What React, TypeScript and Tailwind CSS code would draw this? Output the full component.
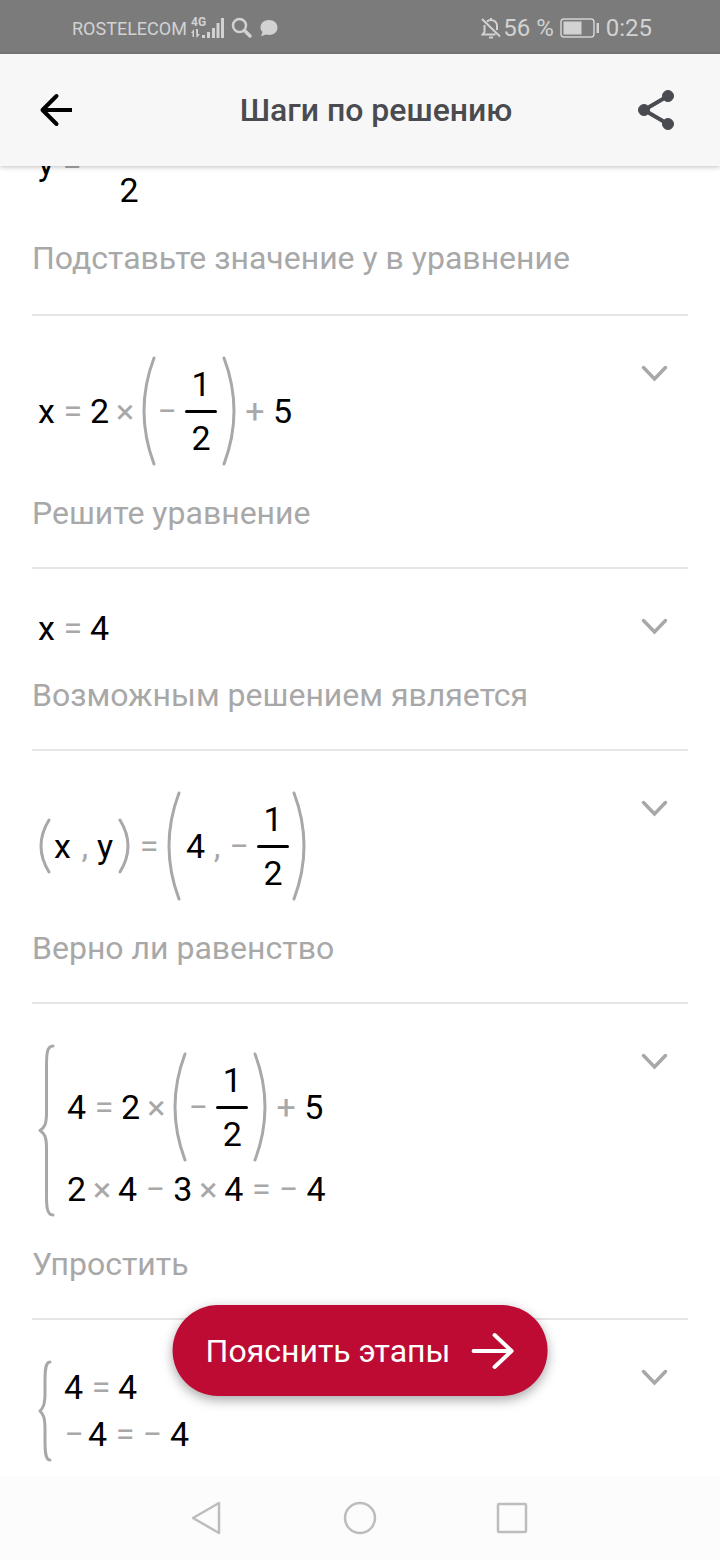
import { useLayoutEffect, useRef } from "react";
import type { ReactNode } from "react";
import clsx from "clsx";

const INITIAL_SCROLL = 91;

type StepProps = {
  formula: ReactNode;
  text?: string;
};

function Equals() {
  return <span className="mr-[7px] ml-2 w-5 text-center text-[#a8a8a8]">=</span>;
}

function Times() {
  return <span className="mx-1.5 w-5 text-center text-[#a8a8a8]">×</span>;
}

function Plus() {
  return <span className="mx-2 w-5 text-center text-[#a8a8a8]">+</span>;
}

function Minus({ unary, leading }: { unary?: boolean; leading?: boolean }) {
  return (
    <span
      className={clsx("w-5 text-center text-[#a8a8a8]", leading ? "mr-1" : "mr-2", !unary && !leading && "ml-2")}
    >
      −
    </span>
  );
}

function Comma({ wide }: { wide?: boolean }) {
  return <span className={clsx("text-center text-[#a8a8a8]", wide ? "w-6" : "w-5")}>,</span>;
}

function Fraction({ top, bottom }: { top: string; bottom: string }) {
  return (
    <span className="flex h-24 w-8 flex-col items-center justify-center">
      <span className="h-[39px] leading-[39px]">{top}</span>
      <span className="my-[6px] h-[3px] w-full rounded-full bg-black" />
      <span className="h-[39px] leading-[39px]">{bottom}</span>
    </span>
  );
}

function Parens({ small, children }: { small?: boolean; children: ReactNode }) {
  const width = small ? 14 : 16;
  const height = small ? 58 : 110;
  const path = small ? "M11 3Q-5 29 11 55" : "M13 2Q-7 55 13 108";
  return (
    <span className="flex items-center">
      <svg width={width} height={height} fill="none" stroke="#a8a8a8" strokeWidth="3" strokeLinecap="round">
        <path d={path} />
      </svg>
      {children}
      <svg width={width} height={height} fill="none" stroke="#a8a8a8" strokeWidth="3" strokeLinecap="round">
        <path d={path} transform={`translate(${width} 0) scale(-1 1)`} />
      </svg>
    </span>
  );
}

function System({ height, width, children }: { height: number; width: number; children: ReactNode }) {
  const mid = height / 2;
  const end = height - 2;
  const stem = width / 2;
  const path = [
    `M${width - 2} 2`,
    `C${stem} 2 ${stem} 12 ${stem} 22`,
    `V${mid - 18}`,
    `C${stem} ${mid - 6} ${stem - 2} ${mid - 3} 2 ${mid}`,
    `C${stem - 2} ${mid + 3} ${stem} ${mid + 6} ${stem} ${mid + 18}`,
    `V${end - 20}`,
    `C${stem} ${end - 10} ${stem} ${end} ${width - 2} ${end}`,
  ].join("");
  return (
    <div className="flex items-center gap-3">
      <svg width={width} height={height} fill="none" stroke="#a8a8a8" strokeWidth="3" strokeLinecap="round" strokeLinejoin="round">
        <path d={path} />
      </svg>
      <div className="flex flex-col gap-2">{children}</div>
    </div>
  );
}

function Row({ children }: { children: ReactNode }) {
  return <div className="flex min-h-[39px] items-center">{children}</div>;
}

function Step({ formula, text }: StepProps) {
  return (
    <section className="border-b-2 border-[#e6e6e6] pt-10 pb-[35px] first:pb-[37px] last:border-0">
      <div className="flex items-start justify-between">
        <div className="pl-1.5 text-[34px] leading-[39px] text-black">{formula}</div>
        <button type="button" aria-label="Развернуть" className="mr-3.5 flex h-[34px] w-10 items-center justify-center">
          <svg width="28" height="18" fill="none" stroke="#a8a8a8" strokeWidth="3.500" strokeLinecap="round">
            <path d="M3.500 3.500L14.500 15L25.500 3.500" />
          </svg>
        </button>
      </div>
      {text && <p className="mt-7 text-[32px] leading-[38px] text-[#a8a8a8]">{text}</p>}
    </section>
  );
}

const steps: StepProps[] = [
  {
    formula: (
      <Row>
        y<Equals />
        <Minus leading />
        <Fraction top="1" bottom="2" />
      </Row>
    ),
    text: "Подставьте значение y в уравнение",
  },
  {
    formula: (
      <Row>
        x<Equals />2<Times />
        <Parens>
          <Minus unary />
          <Fraction top="1" bottom="2" />
          <span className="w-1" />
        </Parens>
        <Plus />5
      </Row>
    ),
    text: "Решите уравнение",
  },
  {
    formula: (
      <Row>
        x<Equals />4
      </Row>
    ),
    text: "Возможным решением является",
  },
  {
    formula: (
      <Row>
        <Parens small>
          <span className="ml-0.5">x</span>
          <span className="mr-0.5 ml-1 flex">
            <Comma />
          </span>
          y
          <span className="w-1" />
        </Parens>
        <Equals />
        <Parens>
          <span className="ml-1">4</span>
          <Comma wide />
          <Minus unary />
          <Fraction top="1" bottom="2" />
          <span className="w-0.5" />
        </Parens>
      </Row>
    ),
    text: "Верно ли равенство",
  },
  {
    formula: (
      <System height={173} width={17}>
        <Row>
          4<Equals />2<Times />
          <Parens>
            <Minus unary />
            <Fraction top="1" bottom="2" />
            <span className="w-1" />
          </Parens>
          <Plus />5
        </Row>
        <Row>
          2<Times />4<Minus />3<Times />4<Equals />
          <Minus unary />4
        </Row>
      </System>
    ),
    text: "Упростить",
  },
  {
    formula: (
      <System height={102} width={14}>
        <Row>
          4<Equals />4
        </Row>
        <Row>
          <Minus leading />4<Equals />
          <Minus unary />4
        </Row>
      </System>
    ),
  },
];

function StatusBar() {
  return (
    <div className="flex h-[54px] shrink-0 items-center justify-between bg-[#7b7b7b] pt-0.5 pr-[68px] pl-[72px] text-[#d2d2d2]">
      <div className="flex items-center">
        <span className="text-[18px]">ROSTELECOM</span>
        <svg className="ml-1" width="34" height="24" fill="currentColor">
          <text x="0" y="10" fontSize="12" fontWeight="700">4G</text>
          <path d="M0 17L3 13V21H1.500V17ZM5 13H7V18H9L5.500 22Z" />
          <path d="M11 19h3v3h-3zM16 16h3v6h-3zM21 12h3v10h-3zM25.500 7h3v15h-3zM30 2h3v20h-3z" />
        </svg>
        <svg className="ml-1.5" width="22" height="22" fill="none" stroke="currentColor" strokeLinecap="round">
          <circle cx="8.500" cy="8.500" r="6.500" strokeWidth="2.500" />
          <path d="M13.500 13.500L19 19" strokeWidth="3.500" />
        </svg>
        <svg className="ml-[7px]" width="18" height="18" fill="currentColor">
          <path d="M9 1C14 1 17.500 4 17.500 8.500S14 16 9 16C7.800 16 6.800 15.800 5.800 15.500L1 17.200L2.500 13C1.200 11.800.500 10.300.500 8.500C.500 4 4 1 9 1Z" />
        </svg>
      </div>
      <div className="flex items-center text-[24px]">
        <svg className="mr-0.5" width="20" height="22" fill="none" stroke="currentColor" strokeWidth="2">
          <path d="M6 4.500C9 1.500 16 3 16 9V13M3.500 8V15L1.500 17.500H14.500M1 2L19 19.500" />
          <path d="M8 20.500H12M10 1V3" />
        </svg>
        <span>56 %</span>
        <svg className="mr-1.5 ml-1.5" width="40" height="20" fill="none">
          <rect x="1" y="1" width="33" height="18" rx="3" stroke="currentColor" strokeWidth="1.500" />
          <rect x="3.500" y="3.500" width="18" height="13" fill="currentColor" />
          <rect x="36.500" y="5" width="2.500" height="10" fill="currentColor" />
        </svg>
        <span>0:25</span>
      </div>
    </div>
  );
}

function Header() {
  return (
    <header className="relative z-10 flex h-28 shrink-0 items-center bg-[#f7f7f7] pr-10 pl-8 shadow-[0_1px_5px_rgba(0,0,0,0.25)]">
      <button type="button" aria-label="Назад" className="flex size-12 items-center justify-center">
        <svg width="34" height="34" fill="none" stroke="#000" strokeWidth="4">
          <path d="M33 17H3" />
          <path d="M17.500 3L3.500 17L17.500 31" strokeLinecap="round" strokeLinejoin="round" />
        </svg>
      </button>
      <h1 className="flex-1 pl-10 text-center text-[32px] font-medium text-[#4a4b50]">Шаги по решению</h1>
      <button type="button" aria-label="Поделиться" className="flex size-12 items-center justify-center">
        <svg width="38" height="42" fill="#4a4b50" stroke="#4a4b50">
          <path d="M31 7L7 21L31 35" fill="none" strokeWidth="4" />
          <circle cx="31" cy="7" r="5.500" />
          <circle cx="7" cy="21" r="5.500" />
          <circle cx="31" cy="35" r="5.500" />
        </svg>
      </button>
    </header>
  );
}

function NavBar() {
  return (
    <nav className="flex h-[84px] shrink-0 items-center justify-center gap-[104px] bg-[#fcfcfc]">
      <button type="button" aria-label="Назад" className="flex size-12 items-center justify-center">
        <svg width="34" height="34" fill="none" stroke="#bdbdbd" strokeWidth="2.500" strokeLinejoin="round">
          <path d="M28 2V32L2 17Z" />
        </svg>
      </button>
      <button type="button" aria-label="Домой" className="flex size-12 items-center justify-center">
        <svg width="34" height="34" fill="none" stroke="#bdbdbd" strokeWidth="2.500">
          <circle cx="17" cy="17" r="15" />
        </svg>
      </button>
      <button type="button" aria-label="Недавние" className="flex size-12 items-center justify-center">
        <svg width="34" height="34" fill="none" stroke="#bdbdbd" strokeWidth="2.500">
          <rect x="3" y="3" width="28" height="28" rx="1" />
        </svg>
      </button>
    </nav>
  );
}

export default function App() {
  const listRef = useRef<HTMLDivElement>(null);

  useLayoutEffect(() => {
    if (listRef.current) listRef.current.scrollTop = INITIAL_SCROLL;
  }, []);

  return (
    <div className="flex h-screen flex-col overflow-hidden bg-white font-[Roboto,sans-serif]">
      <StatusBar />
      <Header />
      <main className="relative min-h-0 flex-1">
        <div ref={listRef} className="h-full overflow-y-auto px-8 pb-28 [scrollbar-width:none]">
          {steps.map((step, idx) => (
            <Step key={idx} {...step} />
          ))}
        </div>
        <button
          type="button"
          className="absolute bottom-20 left-1/2 flex h-[91px] -translate-x-1/2 items-center gap-5 rounded-full bg-[#bd0b33] px-[33px] text-[32px] whitespace-nowrap text-white shadow-[0_4px_12px_rgba(0,0,0,0.35)]"
        >
          Пояснить этапы
          <svg width="44" height="40" fill="none" stroke="currentColor" strokeWidth="4" strokeLinecap="round" strokeLinejoin="round">
            <path d="M3 20H41M24 4L41 20L24 36" />
          </svg>
        </button>
      </main>
      <NavBar />
    </div>
  );
}
